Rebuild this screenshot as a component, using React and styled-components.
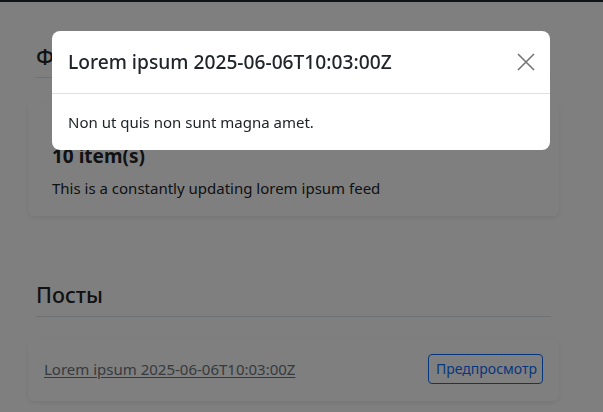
import React from 'react';
import styled, { createGlobalStyle } from 'styled-components';

const GlobalStyle = createGlobalStyle`
  html, body {
    margin: 0;
    padding: 0;
    background: #fff;
    font-family: "Noto Sans", "Liberation Sans", sans-serif;
    color: #212529;
    overflow: hidden;
  }
`;

const Page = styled.div`
  width: 603px;
  height: 412px;
  overflow: hidden;
`;

const TopBar = styled.div`
  height: 2px;
  background: #212529;
`;

const Container = styled.main`
  width: 531px;
  padding-left: 28px;
  display: flex;
  flex-direction: column;
`;

const SectionHead = styled.h4`
  margin: ${p => p.top}px 8px 0 8px;
  padding-bottom: ${p => p.gap}px;
  font-size: 21.5px;
  font-weight: 500;
  line-height: 28px;
  border-bottom: 1px solid #dee2e6;
`;

const Card = styled.div`
  margin-top: ${p => p.top}px;
  background: #fff;
  border-radius: 6px;
  box-shadow: 0 2px 4px rgba(0, 0, 0, 0.08);
  padding: ${p => p.pad};
  display: flex;
  ${p => p.row && `
    align-items: center;
    justify-content: space-between;
  `}
  ${p => !p.row && `flex-direction: column;`}
`;

const Count = styled.h5`
  margin: 0 0 8px;
  font-size: 19px;
  font-weight: 700;
  line-height: 24px;
`;

const Lead = styled.p`
  margin: 0;
  font-size: 15px;
  line-height: 24px;
`;

const PostLink = styled.a`
  color: #6c757d;
  font-size: 15px;
  text-decoration: underline;
  text-underline-offset: 2px;
`;

const OutlineBtn = styled.button`
  font-family: inherit;
  font-size: 14px;
  line-height: 20px;
  padding: 4px 7px;
  width: 115px;
  background: transparent;
  color: #0d6efd;
  border: 1px solid #0d6efd;
  border-radius: 4px;
`;

const Backdrop = styled.div`
  position: fixed;
  inset: 0;
  background: rgba(0, 0, 0, 0.5);
`;

const Dialog = styled.div`
  position: fixed;
  top: 31px;
  left: 52px;
  width: 498px;
  background: #fff;
  border-radius: 8px;
  overflow: hidden;
`;

const DialogHeader = styled.div`
  display: flex;
  align-items: center;
  justify-content: space-between;
  padding: 16px 16px;
  height: 30px;
  border-bottom: 1px solid #dee2e6;
`;

const DialogTitle = styled.h5`
  margin: 0;
  font-size: 19.2px;
  font-weight: 500;
  line-height: 30px;
`;

const CloseBtn = styled.button`
  width: 32px;
  height: 32px;
  border: none;
  background: transparent;
  padding: 0;
  margin-right: -8px;
  display: flex;
  align-items: center;
  justify-content: center;
  cursor: pointer;
`;

const DialogBody = styled.div`
  padding: 16px;
  font-size: 15px;
  line-height: 24px;
`;

export default function App() {
  return (
    <Page>
      <GlobalStyle />
      <TopBar />
      <Container>
        <SectionHead top={41} gap={6}>Фид</SectionHead>
        <Card top={24} pad="42px 24px 16px">
          <Count>10 item(s)</Count>
          <Lead>This is a constantly updating lorem ipsum feed</Lead>
        </Card>
        <SectionHead top={65} gap={7}>Посты</SectionHead>
        <Card row top={21} pad="16px 16px 17px">
          <PostLink href="#">Lorem ipsum 2025-06-06T10:03:00Z</PostLink>
          <OutlineBtn>Предпросмотр</OutlineBtn>
        </Card>
      </Container>
      <Backdrop />
      <Dialog>
        <DialogHeader>
          <DialogTitle>Lorem ipsum 2025-06-06T10:03:00Z</DialogTitle>
          <CloseBtn aria-label="Close">
            <svg width="18" height="18" viewBox="0 0 18 18">
              <path d="M1 1 L17 17 M17 1 L1 17" stroke="#737373" strokeWidth="1.6" />
            </svg>
          </CloseBtn>
        </DialogHeader>
        <DialogBody>Non ut quis non sunt magna amet.</DialogBody>
      </Dialog>
    </Page>
  );
}
